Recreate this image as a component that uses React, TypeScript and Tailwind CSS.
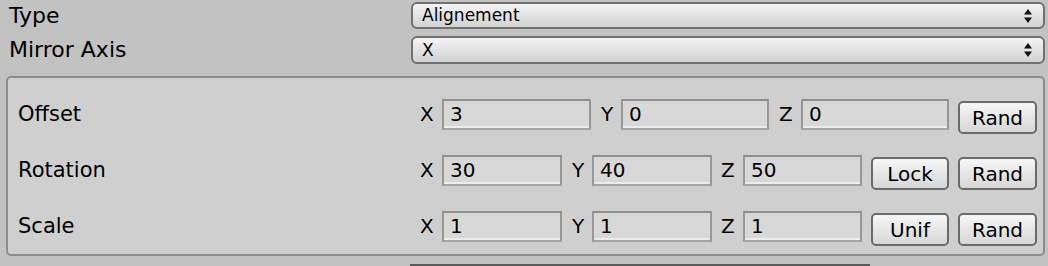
import React from "react";

const font = { fontFamily: '"DejaVu Sans", "Liberation Sans", sans-serif' };

function Arrows() {
  return (
    <svg width="8" height="14" viewBox="0 0 8 14" className="block">
      <polygon points="4,0 8,5.5 0,5.5" fill="#111" />
      <polygon points="4,14 8,8.5 0,8.5" fill="#111" />
    </svg>
  );
}

function Dropdown({ value }: { value: string }) {
  return (
    <div className="flex-1 h-full flex items-center justify-between rounded-[6px] border-2 border-[#707070] bg-gradient-to-b from-[#f4f4f4] to-[#d2d2d2] pl-[9px] pr-[11px]">
      <span className="text-[17px] leading-none text-black">{value}</span>
      <Arrows />
    </div>
  );
}

function Field({ value, w }: { value: string; w: string }) {
  return (
    <div
      className={`${w} h-[31px] flex items-center border-2 border-t-[#8e8e8e] border-l-[#979797] border-r-[#979797] border-b-[#a4a4a4] bg-[#d8d8d8] pl-[6px] shadow-[inset_0_-2px_0_#ececec] text-[20px] leading-none text-black`}
    >
      {value}
    </div>
  );
}

function Btn({ label, w, ml }: { label: string; w: string; ml: string }) {
  return (
    <div
      className={`${w} ${ml} mt-[7px] h-[33px] flex items-center justify-center rounded-[5px] border-2 border-[#6a6a6a] bg-gradient-to-b from-[#f7f7f7] to-[#d6d6d6] text-[20px] leading-none text-black`}
    >
      {label}
    </div>
  );
}

function Axis({ l, w, ml }: { l: string; w: string; ml?: string }) {
  return (
    <span className={`${w} ${ml ?? ""} text-[20px] leading-none text-black`}>{l}</span>
  );
}

export default function App() {
  return (
    <div style={font} className="w-[1048px] h-[266px] overflow-hidden bg-[#c2c2c2] text-black">
      <div className="flex items-center h-[27px] mt-[2px] pr-[3px]">
        <div className="w-[411px] pl-[9px] text-[22px] leading-none">Type</div>
        <Dropdown value="Alignement" />
      </div>
      <div className="flex items-center h-[28px] mt-[7px] pr-[3px]">
        <div className="w-[411px] pl-[9px] text-[22px] leading-none">Mirror Axis</div>
        <Dropdown value="X" />
      </div>
      <div className="ml-[6px] mr-[3px] mt-[12px] h-[180px] rounded-[5px] border-2 border-[#8c8c8c] bg-[#cfcfcf] pt-[8px]">
        <div className="flex items-center h-[56px]">
          <div className="w-[412px] pl-[10px] text-[21px] leading-none">Offset</div>
          <Axis l="X" w="w-[22px]" />
          <Field value="3" w="w-[149px]" />
          <Axis l="Y" w="w-[20px]" ml="ml-[10px]" />
          <Field value="0" w="w-[148px]" />
          <Axis l="Z" w="w-[22px]" ml="ml-[10px]" />
          <Field value="0" w="w-[148px]" />
          <Btn label="Rand" w="w-[79px]" ml="ml-[9px]" />
        </div>
        <div className="flex items-center h-[56px]">
          <div className="w-[412px] pl-[10px] text-[21px] leading-none">Rotation</div>
          <Axis l="X" w="w-[22px]" />
          <Field value="30" w="w-[120px]" />
          <Axis l="Y" w="w-[20px]" ml="ml-[10px]" />
          <Field value="40" w="w-[120px]" />
          <Axis l="Z" w="w-[22px]" ml="ml-[9px]" />
          <Field value="50" w="w-[119px]" />
          <Btn label="Lock" w="w-[78px]" ml="ml-[9px]" />
          <Btn label="Rand" w="w-[79px]" ml="ml-[9px]" />
        </div>
        <div className="flex items-center h-[56px]">
          <div className="w-[412px] pl-[10px] text-[21px] leading-none">Scale</div>
          <Axis l="X" w="w-[22px]" />
          <Field value="1" w="w-[120px]" />
          <Axis l="Y" w="w-[20px]" ml="ml-[10px]" />
          <Field value="1" w="w-[120px]" />
          <Axis l="Z" w="w-[22px]" ml="ml-[9px]" />
          <Field value="1" w="w-[119px]" />
          <Btn label="Unif" w="w-[78px]" ml="ml-[9px]" />
          <Btn label="Rand" w="w-[79px]" ml="ml-[9px]" />
        </div>
      </div>
      <div className="ml-[410px] mt-[8px] w-[460px] h-[4px] bg-[#5a5a5a]" />
    </div>
  );
}
